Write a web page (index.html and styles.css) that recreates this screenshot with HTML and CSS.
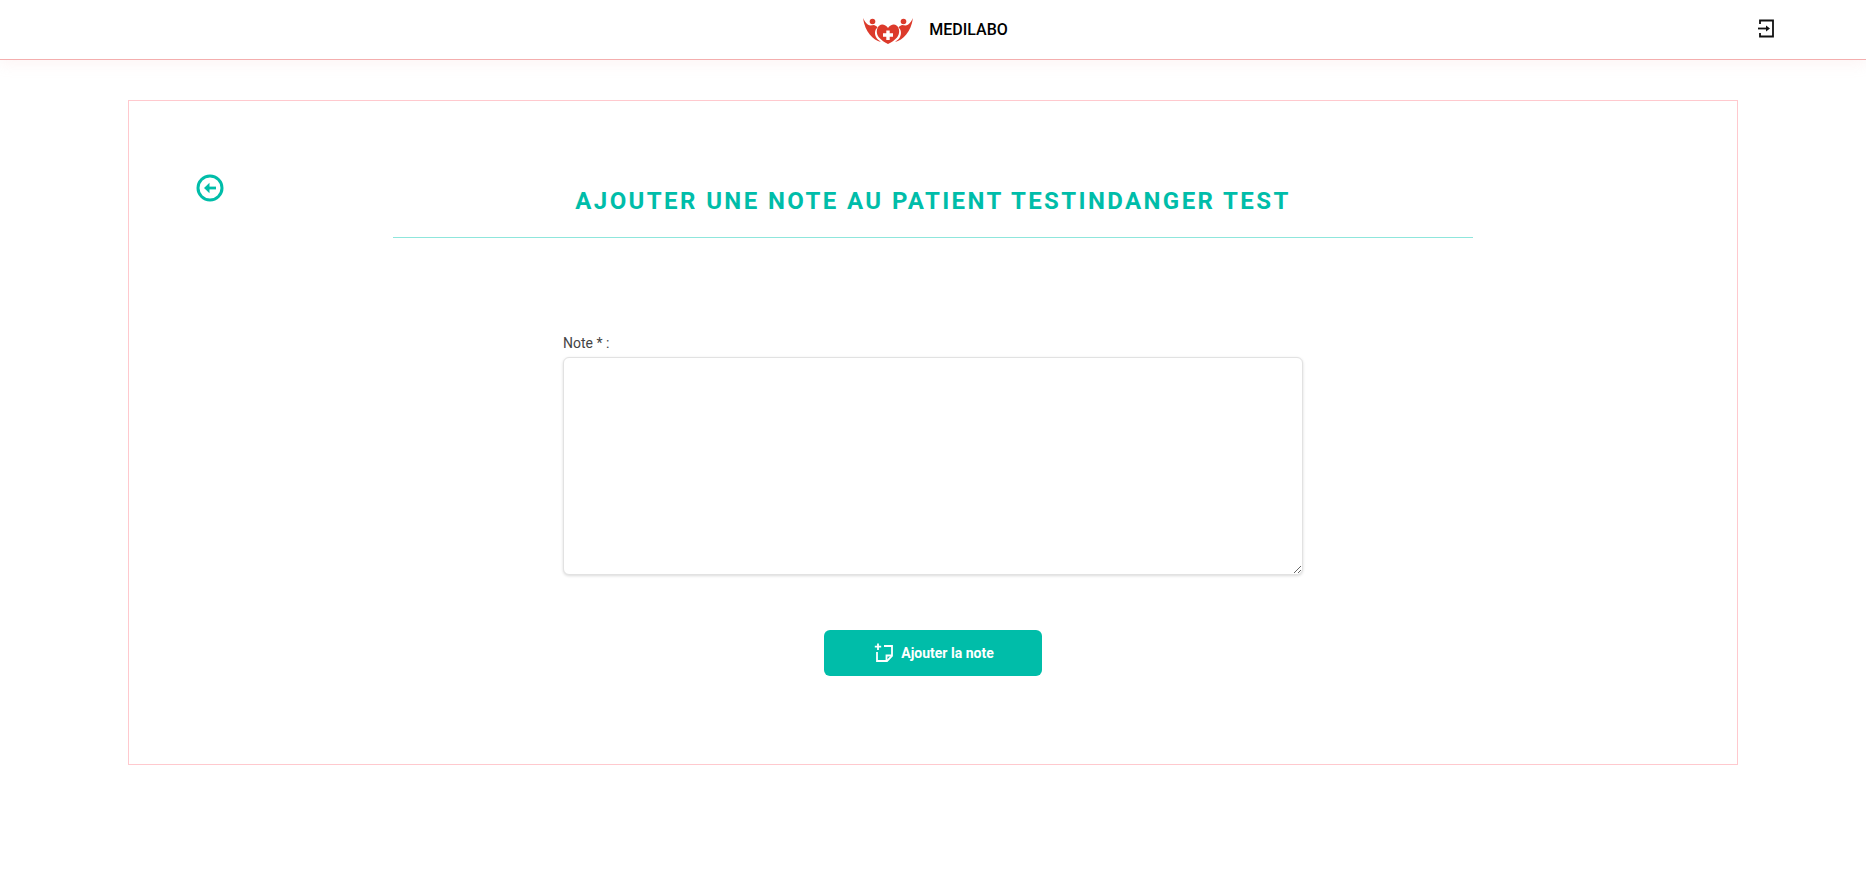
FILE: index.html
```html
<!DOCTYPE html>
<html lang="fr">

<head>
  <meta charset="UTF-8">
  <title>Medilabo</title>
  <link rel="stylesheet" href="styles.css">
</head>

<body>
<header class="navbar">
  <div class="brand">
    <svg class="logo" viewBox="0 0 50 28" width="50" height="28">
      <circle cx="9.500" cy="4.500" r="2.800" fill="#dc3a2b"/>
      <circle cx="40.500" cy="4.500" r="2.800" fill="#dc3a2b"/>
      <path fill="#dc3a2b" d="M0 1C2 5 4 8 7.500 8.500L11 8C12.500 8.500 13.500 9 14.500 10.500C11.500 13 11.500 17 13 20C14 22 16 23.500 18 25C10 23 2 15 0 1Z"/>
      <path fill="#dc3a2b" d="M50 1C48 5 46 8 42.500 8.500L39 8C37.500 8.500 36.500 9 35.500 10.500C38.500 13 38.500 17 37 20C36 22 34 23.500 32 25C40 23 48 15 50 1Z"/>
      <path fill="#dc3a2b" d="M25 11C23 8 19 6.500 16.500 8.500C13 11 13 17 16 20.500C18 23 22 25.500 25 27C28 25.500 32 23 34 20.500C37 17 37 11 33.500 8.500C31 6.500 27 8 25 11Z"/>
      <path fill="#fff" d="M23.300 13.500H26.700V16.300H30V19.700H26.700V23H23.300V19.700H20V16.300H23.300Z"/>
    </svg>
    <span class="brand-name">MEDILABO</span>
  </div>
  <a class="logout" href="#">
    <svg viewBox="0 0 24 24" width="24" height="24" fill="none" stroke="#111" stroke-width="1.800">
      <path d="M7 8V4.500H20V20.500H7V17"/>
      <path d="M5 12.500H14"/>
      <path d="M13 9.500V15.500L17 12.500Z" fill="#111" stroke="none"/>
    </svg>
  </a>
</header>

<main class="card">
  <a class="back" href="#">
    <svg viewBox="0 0 28 28" width="28" height="28" fill="none" stroke="#00bda9">
      <circle cx="14" cy="14" r="12" stroke-width="3"/>
      <path d="M13 14H20" stroke-width="2.800"/>
      <path d="M13.500 8.800V19.200L8 14Z" fill="#00bda9" stroke="none"/>
    </svg>
  </a>
  <h1 class="title">AJOUTER UNE NOTE AU PATIENT TESTINDANGER TEST</h1>
  <form class="note-form">
    <label class="note-label" for="note">Note * :</label>
    <textarea id="note" class="note-input"></textarea>
    <button type="button" class="submit">
      <svg viewBox="0 0 20 20" width="20" height="20" fill="none" stroke="#fff" stroke-width="1.800">
        <path d="M10 3H18V13L13 18H3V9"/>
        <path d="M18 12.500H12.500V18"/>
        <path d="M4 0.500V7M0.800 3.700H7.200"/>
      </svg>
      <span>Ajouter la note</span>
    </button>
  </form>
</main>
</body>

</html>
```

FILE: styles.css
```css
* {
    box-sizing: border-box;
}

body {
    margin: 0;
    font-family: Roboto, "Liberation Sans", sans-serif;
    background-color: #fff;
}

.navbar {
    height: 60px;
    border-bottom: 1px solid #f4aeae;
    box-shadow: 0 4px 14px rgba(244, 174, 174, 0.14);
    display: flex;
    align-items: center;
    justify-content: center;
    position: relative;
}

.brand {
    display: flex;
    align-items: center;
    gap: 16px;
    margin-left: 5px;
}

.logo {
    margin-top: 2px;
}

.brand-name {
    font-size: 16px;
    font-weight: 500;
    color: #000;
}

.logout {
    position: absolute;
    right: 89px;
    top: 16px;
    height: 24px;
}

.card {
    width: 1610px;
    height: 665px;
    margin: 40px auto 0;
    border: 1px solid #ffc9ce;
    padding: 70px 0 0;
    position: relative;
}

.back {
    position: absolute;
    left: 67px;
    top: 73px;
    height: 28px;
}

.title {
    width: 1080px;
    margin: 0 auto;
    padding: 16px 0 22px;
    border-bottom: 1px solid #8fe6dc;
    font-size: 24px;
    line-height: 28px;
    font-weight: 700;
    letter-spacing: 2.4px;
    text-align: center;
    color: #00bda9;
}

.note-form {
    width: 740px;
    margin: 97px auto 0;
    display: flex;
    flex-direction: column;
}

.note-label {
    font-size: 14px;
    line-height: 16px;
    color: #444;
    margin-bottom: 6px;
}

.note-input {
    width: 740px;
    height: 218px;
    border: 1px solid #e2e2e2;
    border-radius: 6px;
    box-shadow: 0 1px 3px rgba(0, 0, 0, 0.15);
    outline: none;
}

.submit {
    width: 218px;
    height: 46px;
    margin: 55px auto 0;
    padding: 0 0 1px 2px;
    border: none;
    border-radius: 6px;
    background-color: #00bda9;
    color: #fff;
    font-family: inherit;
    font-size: 14px;
    font-weight: 700;
    display: flex;
    align-items: center;
    justify-content: center;
    gap: 7px;
}
```
